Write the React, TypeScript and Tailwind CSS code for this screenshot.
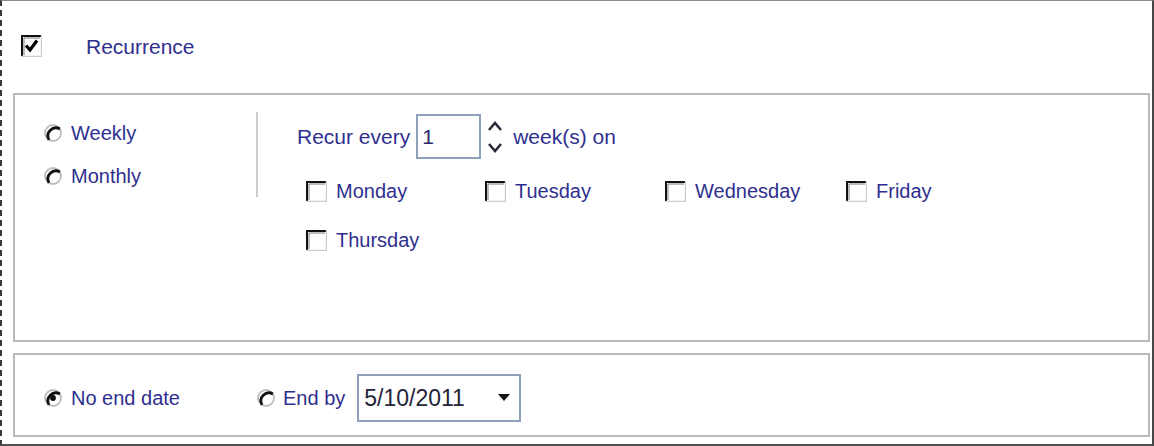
import React from "react";

const TXT = "text-[#2f2f8f]";

function Radio({ checked = false }: { checked?: boolean }) {
  return (
    <svg width="20" height="20" viewBox="0 0 20 20" className="shrink-0">
      <circle cx="10" cy="10" r="8" fill="white" />
      <circle cx="10" cy="10" r="8" stroke="#bdbdbd" strokeWidth="1.8" fill="none" />
      <path d="M 16.9 6 A 8 8 0 0 0 6 16.9" stroke="#111" strokeWidth="2.8" fill="none" />
      {checked && <circle cx="10" cy="10" r="2.9" fill="#111" />}
    </svg>
  );
}

function Check({ checked = false, h = 21 }: { checked?: boolean; h?: number }) {
  return (
    <svg width="21" height={h} viewBox={`0 0 21 ${h}`} className="shrink-0">
      <rect x="0" y="0" width="21" height={h} fill="white" />
      <path d={`M 1 ${h - 1} V 1 H 20`} stroke="#111" strokeWidth="2" fill="none" />
      <path d={`M 3 ${h - 2} V 3 H 19`} stroke="#7a7a7a" strokeWidth="1" fill="none" />
      <path d={`M 0.5 ${h - 0.5} H 20.5 V 0.5`} stroke="#cccccc" strokeWidth="1.4" fill="none" />
      {checked && (
        <path d="M 5 10.5 L 9 15 L 16 5.5" stroke="#000" strokeWidth="3.2" fill="none" strokeLinejoin="miter" />
      )}
    </svg>
  );
}

function Day({ label }: { label: string }) {
  return (
    <div className="flex items-center h-[22px]">
      <Check />
      <span className={`ml-[9px] text-[20px] leading-none ${TXT}`}>{label}</span>
    </div>
  );
}

export default function App() {
  return (
    <div className="w-[1154px] h-[446px] bg-white box-border border-t border-t-[#8a8a8a] border-r-2 border-r-[#474747] border-b-2 border-b-[#505050] border-l-2 border-l-[#3a3a3a] [border-left-style:dashed] font-['Liberation_Sans',Arial,sans-serif] flex flex-col">
      {/* Header */}
      <div className="h-[92px] flex items-center pl-[19px] pb-[2px] shrink-0">
        <Check checked h={22} />
        <span className={`ml-[44px] text-[21px] leading-none ${TXT}`}>Recurrence</span>
      </div>

      {/* Pattern panel */}
      <div className="ml-[11px] mr-[2px] h-[249px] shrink-0 border-2 border-[#b9b9b9] flex items-start pt-[17px]">
        <div className="w-[241px] pl-[28px] pt-[9px] flex flex-col gap-[19px]">
          <div className="flex items-center h-[24px]">
            <Radio />
            <span className={`ml-[8px] text-[20px] leading-none ${TXT}`}>Weekly</span>
          </div>
          <div className="flex items-center h-[24px]">
            <Radio />
            <span className={`ml-[8px] text-[20px] leading-none ${TXT}`}>Monthly</span>
          </div>
        </div>
        <div className="w-[2px] h-[85px] bg-[#cdcdcd]" />
        <div className="ml-[39px] pt-[2px] flex flex-col">
          <div className="flex items-center h-[45px]">
            <span className={`text-[21px] leading-none ${TXT}`}>Recur every</span>
            <div className="ml-[6px] w-[65px] h-[45px] border-2 border-[#8fa0bb] flex items-center pl-[4px]">
              <span className="text-[21px] leading-none text-[#2a2a6a]">1</span>
            </div>
            <svg width="16" height="36" viewBox="0 0 16 36" className="ml-[6px]">
              <path d="M 2 11 L 8 4 L 14 11" stroke="#2a2a3a" strokeWidth="2.6" fill="none" />
              <path d="M 2 25 L 8 32 L 14 25" stroke="#2a2a3a" strokeWidth="2.6" fill="none" />
            </svg>
            <span className={`ml-[10px] text-[21px] leading-none ${TXT}`}>week(s) on</span>
          </div>
          <div className="mt-[21px] pl-[9px] grid grid-cols-[179px_180px_181px_auto] gap-y-[27px]">
            <Day label="Monday" />
            <Day label="Tuesday" />
            <Day label="Wednesday" />
            <Day label="Friday" />
            <Day label="Thursday" />
          </div>
        </div>
      </div>

      {/* End panel */}
      <div className="mt-[11px] ml-[11px] mr-[2px] h-[84px] shrink-0 border-2 border-[#b9b9b9] flex items-center pl-[28px] pt-[6px]">
        <div className="w-[213px] flex items-center">
          <Radio checked />
          <span className={`ml-[8px] text-[20px] leading-none ${TXT}`}>No end date</span>
        </div>
        <div className="flex items-center">
          <Radio />
          <span className={`ml-[7px] text-[20px] leading-none ${TXT}`}>End by</span>
        </div>
        <div className="ml-[12px] w-[164px] h-[48px] border-2 border-[#8fa0bb] flex items-center pl-[5px] pr-[9px] justify-between">
          <span className="text-[23px] leading-none text-[#24243a]">5/10/2011</span>
          <svg width="12" height="8" viewBox="0 0 12 8">
            <path d="M 0 0 H 12 L 6 7 Z" fill="#111" />
          </svg>
        </div>
      </div>
    </div>
  );
}
